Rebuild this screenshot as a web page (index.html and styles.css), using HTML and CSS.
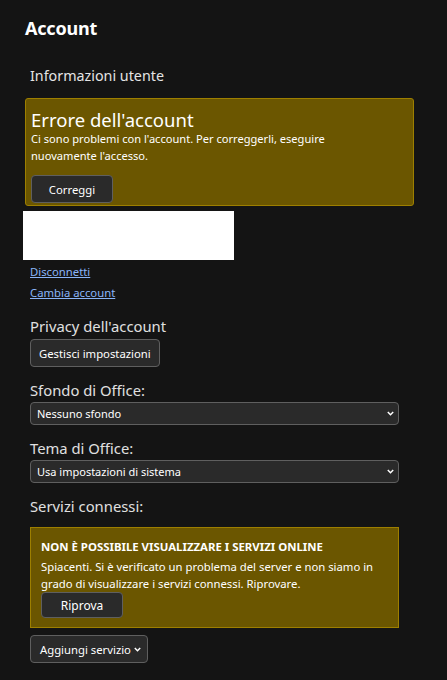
FILE: index.html
```html
<!DOCTYPE html>
<html lang="it">
<head>
<meta charset="utf-8">
<title>Account</title>
<link rel="stylesheet" href="styles.css">
</head>
<body>
<main class="pane">
  <h1 class="title">Account</h1>

  <section class="user-info">
    <h2 class="section-label">Informazioni utente</h2>
    <div class="alert alert-account">
      <div class="alert-title">Errore dell'account</div>
      <p class="alert-text">Ci sono problemi con l'account. Per correggerli, eseguire nuovamente l'accesso.</p>
      <button class="btn btn-fix">Correggi</button>
    </div>
    <div class="user-card"></div>
    <div class="links">
      <a href="#" class="link">Disconnetti</a>
      <a href="#" class="link">Cambia account</a>
    </div>
  </section>

  <div class="settings">
    <section class="section">
      <h2 class="field-label">Privacy dell'account</h2>
      <button class="btn btn-manage">Gestisci impostazioni</button>
    </section>

    <section class="section">
      <h2 class="field-label">Sfondo di Office:</h2>
      <div class="select">
        <span>Nessuno sfondo</span>
        <svg class="chev" width="7" height="5" viewBox="0 0 7 5"><path d="M0.8 1 L3.5 3.7 L6.2 1" fill="none" stroke="#fff" stroke-width="1.5"/></svg>
      </div>
    </section>

    <section class="section">
      <h2 class="field-label">Tema di Office:</h2>
      <div class="select">
        <span>Usa impostazioni di sistema</span>
        <svg class="chev" width="7" height="5" viewBox="0 0 7 5"><path d="M0.8 1 L3.5 3.7 L6.2 1" fill="none" stroke="#fff" stroke-width="1.5"/></svg>
      </div>
    </section>

    <section class="section">
      <h2 class="field-label">Servizi connessi:</h2>
      <div class="alert alert-services">
        <div class="alert-heading">NON È POSSIBILE VISUALIZZARE I SERVIZI ONLINE</div>
        <p class="alert-text">Spiacenti. Si è verificato un problema del server e non siamo in grado di visualizzare i servizi connessi. Riprovare.</p>
        <button class="btn btn-retry">Riprova</button>
      </div>
      <button class="btn btn-add">Aggiungi servizio
        <svg class="chev" width="7" height="5" viewBox="0 0 7 5"><path d="M0.8 1 L3.5 3.7 L6.2 1" fill="none" stroke="#fff" stroke-width="1.5"/></svg>
      </button>
    </section>
  </div>
</main>
</body>
</html>
```
FILE: styles.css
```css
* { box-sizing: border-box; }

html, body {
  margin: 0;
  background: #141414;
  color: #ffffff;
  font-family: "Noto Sans", "Open Sans", sans-serif;
}

.pane {
  padding: 15px 48px 0 25px;
}

.title {
  margin: 0;
  font-size: 18px;
  font-weight: 700;
  letter-spacing: -0.2px;
  line-height: 26px;
}

/* ---- user info ---- */

.section-label {
  margin: 25px 0 0 5px;
  font-size: 14.3px;
  font-weight: 400;
  line-height: 20px;
  color: #e4e4e4;
}

.alert {
  background: #6b5600;
  border: 1px solid #9d7f00;
}

.alert-account {
  margin: 12px -15px 0 0;
  border-radius: 3px;
  padding: 10px 5px 0 5px;
  height: 108px;
}

.alert-title {
  font-size: 18.5px;
  font-weight: 400;
  line-height: 22px;
}

.alert-text {
  margin: 0;
  font-size: 11.1px;
  line-height: 17px;
}

.alert-account .alert-text {
  max-width: 340px;
  margin-top: -1px;
}

.user-card {
  width: 211px;
  height: 49px;
  margin: 5px 0 0 -2px;
  background: #ffffff;
}

.links {
  display: flex;
  flex-direction: column;
  align-items: flex-start;
  gap: 4px;
  margin: 3px 0 0 5px;
}

.link {
  color: #8ab4f8;
  font-size: 11.3px;
  line-height: 17px;
}

/* ---- buttons ---- */

.btn {
  display: inline-flex;
  align-items: center;
  justify-content: center;
  gap: 3px;
  height: 28px;
  padding: 0 8px;
  background: #2a2a2a;
  border: 1px solid #5f5f5f;
  border-radius: 4px;
  color: #ffffff;
  font-family: inherit;
  font-size: 11.3px;
}

.btn-fix {
  width: 82px;
  margin-top: 11px;
}

.btn-manage { margin-top: 1px; }

.btn-retry {
  width: 82px;
  height: 26px;
  font-size: 12px;
}

.btn-add {
  margin-top: 7px;
  padding: 0 6px 0 9px;
}

/* ---- settings list ---- */

.settings {
  display: flex;
  flex-direction: column;
  gap: 13px;
  margin: 15px 0 0 5px;
}

.field-label {
  margin: 0 0 2px;
  font-size: 14.8px;
  font-weight: 400;
  line-height: 20px;
  color: #e0e0e0;
}

.select {
  display: flex;
  align-items: center;
  justify-content: space-between;
  height: 23px;
  padding: 0 4px 0 6px;
  background: #2a2a2a;
  border: 1px solid #5f5f5f;
  border-radius: 4px;
  font-size: 11px;
}

.chev { display: block; }

.alert-services {
  margin-top: 11px;
  padding: 11px 10px 0;
  height: 101px;
}

.alert-heading {
  font-size: 11.4px;
  font-weight: 700;
  line-height: 16px;
}

.alert-services .alert-text {
  margin-top: 3px;
  font-size: 11.3px;
}
```
